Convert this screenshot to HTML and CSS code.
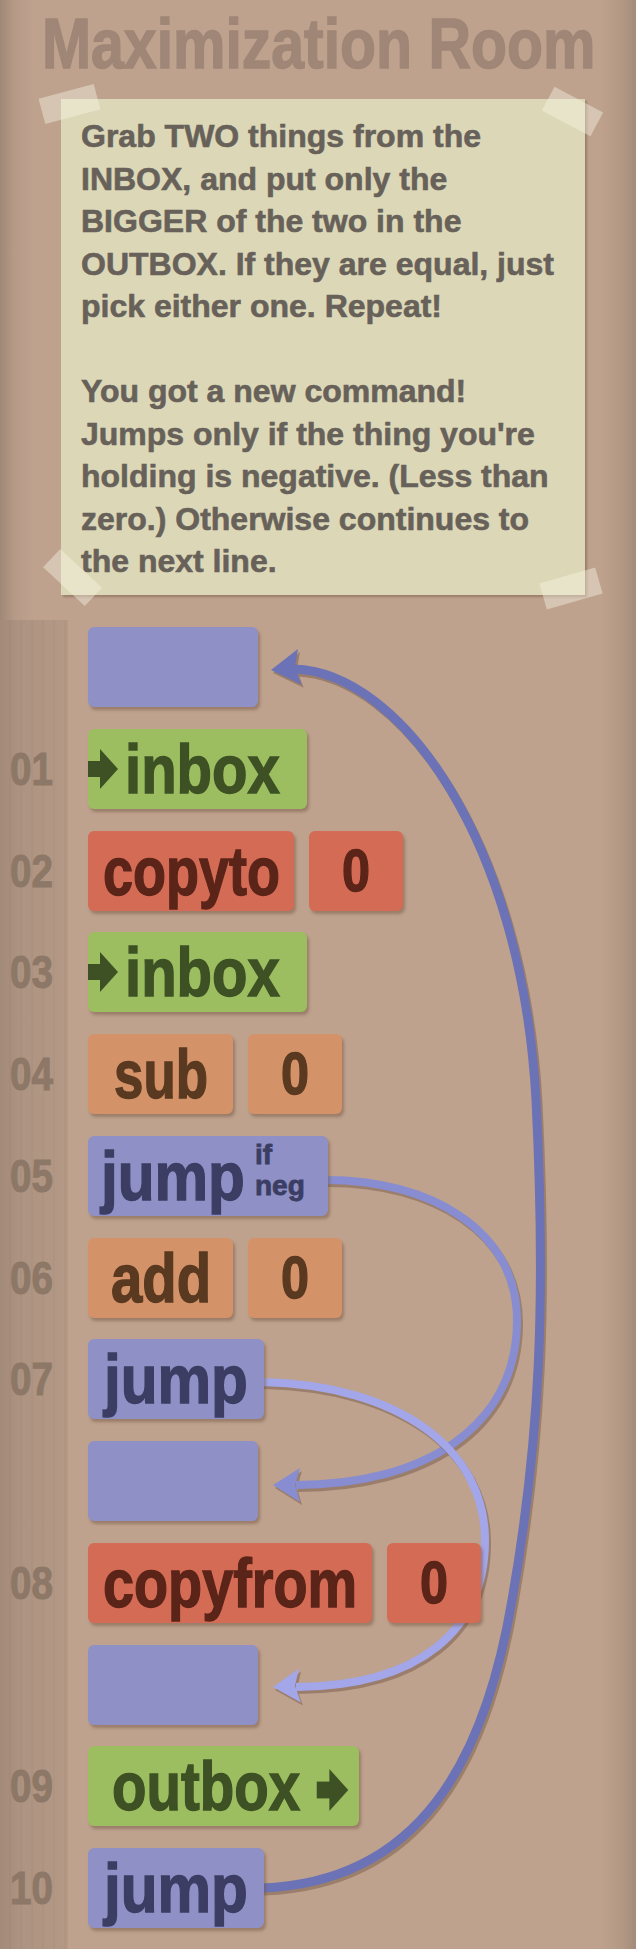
FILE: index.html
```html
<!DOCTYPE html>
<html>
<head>
<meta charset="utf-8">
<title>Maximization Room</title>
<link rel="stylesheet" href="styles.css">
</head>
<body>
<div class="page">
  <h1 class="title"><span class="title-text">Maximization Room</span></h1>

  <div class="note">
    <span class="tape tape-tl"></span>
    <span class="tape tape-tr"></span>
    <span class="tape tape-bl"></span>
    <span class="tape tape-br"></span>
    <p class="note-text">Grab TWO things from the<br>INBOX, and put only the<br>BIGGER of the two in the<br>OUTBOX. If they are equal, just<br>pick either one. Repeat!</p>
    <p class="note-text gap">You got a new command!<br>Jumps only if the thing you're<br>holding is negative. (Less than<br>zero.) Otherwise continues to<br>the next line.</p>
  </div>

  <svg class="arrows" width="636" height="1949" viewBox="0 0 636 1949">
    <g class="shadow" transform="translate(2 3)">
      <path d="M 262 1888 C 420 1882, 485 1760, 512 1600 C 540 1440, 546 1300, 536 1100 C 522 840, 400 672, 294 669" stroke-width="9"/>
      <polygon points="0,0 29,-18 24,0 29,18" transform="translate(271 670) rotate(-6)"/>
    </g>
    <g class="arc-big">
      <path d="M 262 1888 C 420 1882, 485 1760, 512 1600 C 540 1440, 546 1300, 536 1100 C 522 840, 400 672, 294 669" stroke-width="9"/>
      <polygon points="0,0 29,-18 24,0 29,18" transform="translate(271 670) rotate(-6)"/>
    </g>

    <g class="shadow" transform="translate(2 3)">
      <path d="M 326 1180 C 430 1180, 517 1230, 517 1320 C 517 1430, 420 1485, 296 1485" stroke-width="8"/>
      <polygon points="0,0 27,-17 22,0 27,17" transform="translate(273 1485)"/>
    </g>
    <g class="arc-neg">
      <path d="M 326 1180 C 430 1180, 517 1230, 517 1320 C 517 1430, 420 1485, 296 1485" stroke-width="8"/>
      <polygon points="0,0 27,-17 22,0 27,17" transform="translate(273 1485)"/>
    </g>

    <g class="shadow" transform="translate(2 3)">
      <path d="M 262 1382 C 400 1385, 485 1450, 485 1540 C 485 1630, 420 1686, 296 1687" stroke-width="8"/>
      <polygon points="0,0 27,-17 22,0 27,17" transform="translate(273 1687) rotate(-3)"/>
    </g>
    <g class="arc-jump">
      <path d="M 262 1382 C 400 1385, 485 1450, 485 1540 C 485 1630, 420 1686, 296 1687" stroke-width="8"/>
      <polygon points="0,0 27,-17 22,0 27,17" transform="translate(273 1687) rotate(-3)"/>
    </g>
  </svg>

  <div class="program">
    <div class="row"><span class="ln"></span><div class="blk blue w-empty"></div></div>

    <div class="row"><span class="ln"><span class="num">01</span></span>
      <div class="blk green w-inbox">
        <svg class="io-arrow" width="30" height="40" viewBox="0 0 30 40"><rect x="0" y="12" width="13" height="16"/><polygon points="12,0 30,20 12,40"/></svg>
        <span class="word t-inbox">inbox</span>
      </div>
    </div>

    <div class="row"><span class="ln"><span class="num">02</span></span><div class="blk red w-copyto"><span class="word t-copyto">copyto</span></div><div class="blk red val"><span class="word t-zero">0</span></div></div>

    <div class="row"><span class="ln"><span class="num">03</span></span>
      <div class="blk green w-inbox">
        <svg class="io-arrow" width="30" height="40" viewBox="0 0 30 40"><rect x="0" y="12" width="13" height="16"/><polygon points="12,0 30,20 12,40"/></svg>
        <span class="word t-inbox">inbox</span>
      </div>
    </div>

    <div class="row"><span class="ln"><span class="num">04</span></span><div class="blk orange w-math"><span class="word t-sub">sub</span></div><div class="blk orange val"><span class="word t-zero">0</span></div></div>

    <div class="row"><span class="ln"><span class="num">05</span></span>
      <div class="blk blue w-jumpneg"><span class="word t-jump">jump</span><span class="cond"><span>if</span><span>neg</span></span></div>
    </div>

    <div class="row"><span class="ln"><span class="num">06</span></span><div class="blk orange w-math"><span class="word t-add">add</span></div><div class="blk orange val"><span class="word t-zero">0</span></div></div>

    <div class="row"><span class="ln"><span class="num">07</span></span><div class="blk blue w-jump"><span class="word t-jump">jump</span></div></div>

    <div class="row"><span class="ln"></span><div class="blk blue w-empty"></div></div>

    <div class="row"><span class="ln"><span class="num">08</span></span><div class="blk red w-copyfrom"><span class="word t-copyfrom">copyfrom</span></div><div class="blk red val"><span class="word t-zero">0</span></div></div>

    <div class="row"><span class="ln"></span><div class="blk blue w-empty"></div></div>

    <div class="row"><span class="ln"><span class="num">09</span></span>
      <div class="blk green w-outbox">
        <span class="word t-outbox">outbox</span>
        <svg class="io-arrow out" width="33" height="42" viewBox="0 0 30 40"><rect x="0" y="12" width="13" height="16"/><polygon points="12,0 30,20 12,40"/></svg>
      </div>
    </div>

    <div class="row"><span class="ln"><span class="num">10</span></span><div class="blk blue w-jump"><span class="word t-jump">jump</span></div></div>
  </div>
</div>
</body>
</html>
```

FILE: styles.css
```css
html, body {
  margin: 0;
  padding: 0;
}

body {
  background: #bea28e;
}

.page {
  position: relative;
  width: 636px;
  height: 1949px;
  overflow: hidden;
  background: linear-gradient(90deg, #a08776 0px, #b59a87 14px, #bea28e 34px, #bea28e 600px, #b39884 622px, #a48b7a 636px);
  font-family: "Liberation Sans", Arial, sans-serif;
  font-weight: bold;
}

/* The game font is a heavy condensed face; Liberation Sans Bold is
   narrowed horizontally to the reference widths and thickened slightly. */
.title {
  box-sizing: border-box;
  height: 99px;
  margin: 0;
  padding-top: 8px;
  font-size: 71px;
  line-height: 71px;
  text-align: center;
  color: #9f8676;
  white-space: nowrap;
  -webkit-text-stroke: 1.5px #9f8676;
}

.title-text {
  display: inline-block;
  width: 553px;
  text-align: left;
  transform: scaleX(0.83);
  transform-origin: 0 50%;
}

.note {
  position: relative;
  box-sizing: border-box;
  width: 524px;
  height: 496px;
  margin-left: 61px;
  padding: 16px 0 0 20px;
  background: #dcd8b7;
  box-shadow: 2px 2px 2px rgba(110, 85, 65, 0.45);
}

.note-text {
  margin: 0;
  font-size: 32px;
  line-height: 42.5px;
  color: #67615a;
  white-space: nowrap;
  -webkit-text-stroke: 0.6px #67615a;
}

.note-text.gap {
  margin-top: 42.5px;
}

.tape {
  position: absolute;
  background: rgba(248, 245, 228, 0.42);
}

.tape-tl {
  width: 57px;
  height: 26px;
  left: -20px;
  top: -8px;
  transform: rotate(-15deg);
}

.tape-tr {
  width: 55px;
  height: 27px;
  left: 484px;
  top: -1px;
  transform: rotate(28deg);
}

.tape-bl {
  width: 57px;
  height: 25px;
  left: -17px;
  top: 466px;
  transform: rotate(43deg);
}

.tape-br {
  width: 58px;
  height: 27px;
  left: 481px;
  top: 476px;
  transform: rotate(-16deg);
}

.arrows {
  position: absolute;
  left: 0;
  top: 0;
  z-index: 0;
  pointer-events: none;
}

.arrows path {
  fill: none;
  stroke-linecap: butt;
}

.shadow {
  opacity: 0.55;
}

.shadow path { stroke: #7e624f; }
.shadow polygon { fill: #7e624f; }

.arc-big path { stroke: #6b72b6; }
.arc-big polygon { fill: #6b72b6; }
.arc-neg path { stroke: #878dd0; }
.arc-neg polygon { fill: #878dd0; }
.arc-jump path { stroke: #a3a6e8; }
.arc-jump polygon { fill: #a3a6e8; }

.program {
  position: relative;
  z-index: 1;
  margin-top: 25px;
  padding-top: 7px;
  height: 1329px;
  box-sizing: border-box;
  background:
    repeating-linear-gradient(90deg, rgba(255, 255, 255, 0) 0px, rgba(255, 255, 255, 0) 9px, rgba(90, 60, 40, 0.04) 9px, rgba(90, 60, 40, 0.04) 11px) 0 0 / 68px 100% no-repeat,
    linear-gradient(90deg, #a38a79 0px, #ad9381 20px, #b49986 68px) 0 0 / 68px 100% no-repeat;
}

.row {
  display: flex;
  align-items: center;
  gap: 15px;
  height: 80px;
  margin-bottom: 21.75px;
}

.ln {
  box-sizing: border-box;
  width: 68px;
  margin-right: 5px;
  padding-right: 15px;
  text-align: right;
  font-size: 46px;
  line-height: 84px;
  color: #8d7767;
  white-space: nowrap;
  -webkit-text-stroke: 1px #8d7767;
}

.num {
  display: inline-block;
  width: 43px;
  text-align: left;
  transform: scaleX(0.84);
  transform-origin: 0 50%;
}

.blk {
  box-sizing: border-box;
  height: 80px;
  display: flex;
  align-items: center;
  justify-content: center;
  border-radius: 6px;
  font-size: 68px;
  line-height: 80px;
  box-shadow: 2px 3px 3px rgba(110, 80, 60, 0.45);
  white-space: nowrap;
  -webkit-text-stroke: 1.4px currentColor;
}

.blue { background: #8e90c6; color: #3b3d63; }
.green { background: #9cbd60; color: #3d5124; }
.red { background: #d46b55; color: #5b2419; }
.orange { background: #d49268; color: #5a3921; }

.w-empty { width: 170px; }
.w-inbox { width: 219px; justify-content: flex-start; }
.w-copyto { width: 206px; }
.w-math { width: 145px; }
.w-jumpneg { width: 240px; justify-content: flex-start; padding-left: 13px; }
.w-jump { width: 176px; }
.w-copyfrom { width: 284px; }
.w-outbox { width: 271px; justify-content: flex-start; padding-left: 24px; }

.word {
  display: inline-block;
  flex: none;
  transform-origin: 0 50%;
}

.t-inbox { width: 155px; transform: scaleX(0.854); }
.t-copyto { width: 177px; transform: scaleX(0.794); }
.t-sub { width: 94px; transform: scaleX(0.777); }
.t-add { width: 100px; transform: scaleX(0.827); }
.t-jump { width: 144px; transform: scaleX(0.886); }
.t-copyfrom { width: 254px; transform: scaleX(0.82); }
.t-outbox { width: 188px; transform: scaleX(0.83); }
.t-zero { width: 28px; transform: scaleX(0.84); }

.val {
  width: 94px;
  font-size: 60px;
  line-height: 86px;
}

.io-arrow {
  flex: none;
  fill: currentColor;
}

.w-inbox .io-arrow {
  margin-right: 7px;
}

.io-arrow.out {
  margin-left: 16px;
  margin-top: 8px;
}

.cond {
  display: flex;
  flex-direction: column;
  margin-left: 10px;
  font-size: 28px;
  line-height: 31.5px;
  padding-bottom: 11px;
  -webkit-text-stroke: 0.8px currentColor;
}
```
